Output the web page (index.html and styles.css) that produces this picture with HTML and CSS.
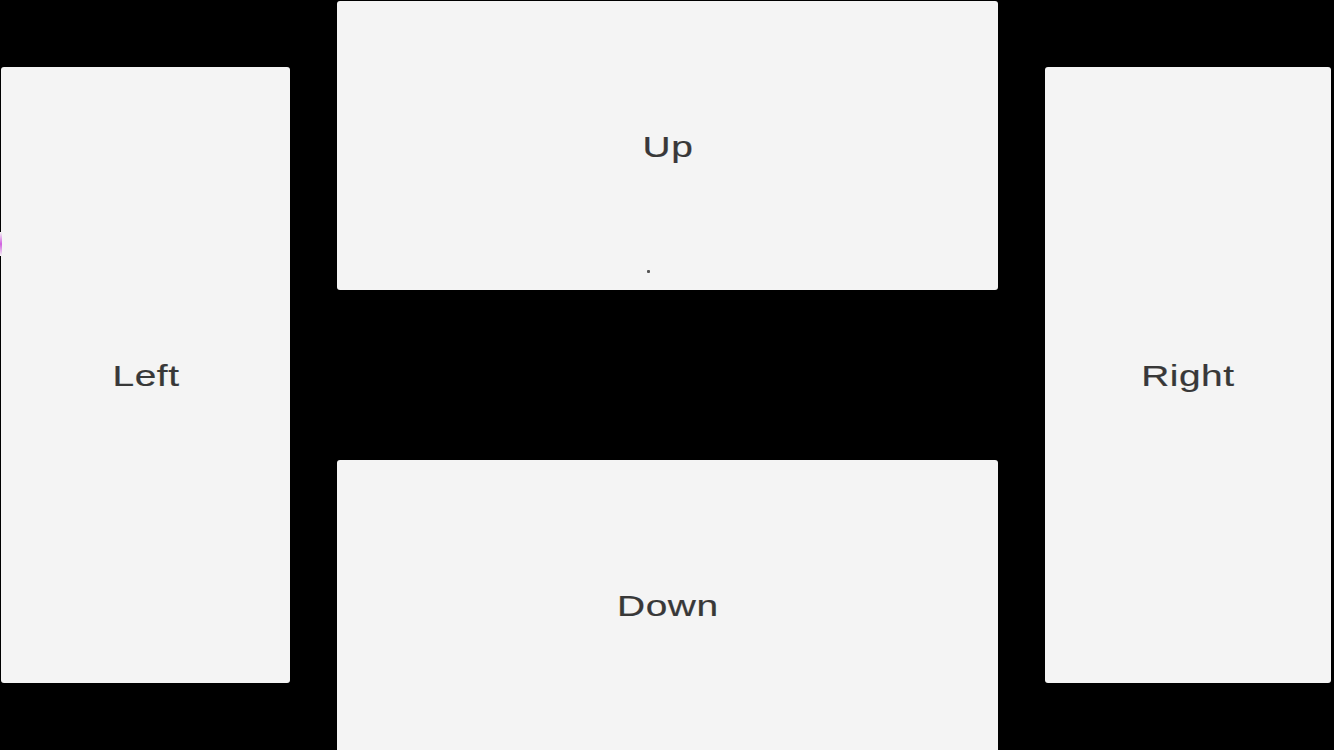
FILE: index.html
```html
<!DOCTYPE html>
<html>
<head>
<meta charset="utf-8">
<link rel="stylesheet" href="styles.css">
</head>
<body>
<div class="screen">
  <div class="side side-left">
    <span class="edge-mark"></span>
    <div class="panel panel-side"><span class="label">Left</span></div>
  </div>
  <div class="middle">
    <div class="panel panel-up"><span class="label">Up</span><span class="dot"></span></div>
    <div class="panel panel-down"><span class="label">Down</span></div>
  </div>
  <div class="side side-right">
    <div class="panel panel-side"><span class="label">Right</span></div>
  </div>
</div>
</body>
</html>
```
FILE: styles.css
```css
html, body {
  margin: 0;
  padding: 0;
  background: #000;
}
.screen {
  width: 1334px;
  height: 750px;
  display: flex;
  background: #000;
  overflow: hidden;
  font-family: "Liberation Sans", Arial, sans-serif;
}
.side {
  position: relative;
  display: flex;
  flex-direction: column;
  padding-top: 67px;
  box-sizing: border-box;
}
.side-left {
  margin-left: 1px;
  width: 289px;
}
.side-right {
  margin-left: 47px;
  width: 286px;
}
.middle {
  margin-left: 47px;
  width: 661px;
  height: 750px;
  display: flex;
  flex-direction: column;
  justify-content: space-between;
}
.panel {
  position: relative;
  background: #f4f4f4;
  border-radius: 3px;
  display: flex;
  align-items: center;
  justify-content: center;
}
.panel-side {
  height: 616px;
}
.panel-up {
  margin-top: 1px;
  height: 289px;
}
.panel-down {
  height: 290px;
  border-bottom-left-radius: 0;
  border-bottom-right-radius: 0;
}
.label {
  display: inline-block;
  font-size: 29px;
  margin-top: 3px;
  color: #383838;
  letter-spacing: 0.4px;
  transform: scaleX(1.34);
  -webkit-text-stroke: 0.2px #383838;
}
.dot {
  position: absolute;
  left: 310px;
  top: 269px;
  width: 3px;
  height: 3px;
  background: #555;
  border-radius: 1px;
}
.edge-mark {
  position: absolute;
  left: -1px;
  top: 232px;
  width: 2px;
  height: 24px;
  background: linear-gradient(#f4f4f4, #d060e0 50%, #f4f4f4);
  z-index: 1;
}
```
